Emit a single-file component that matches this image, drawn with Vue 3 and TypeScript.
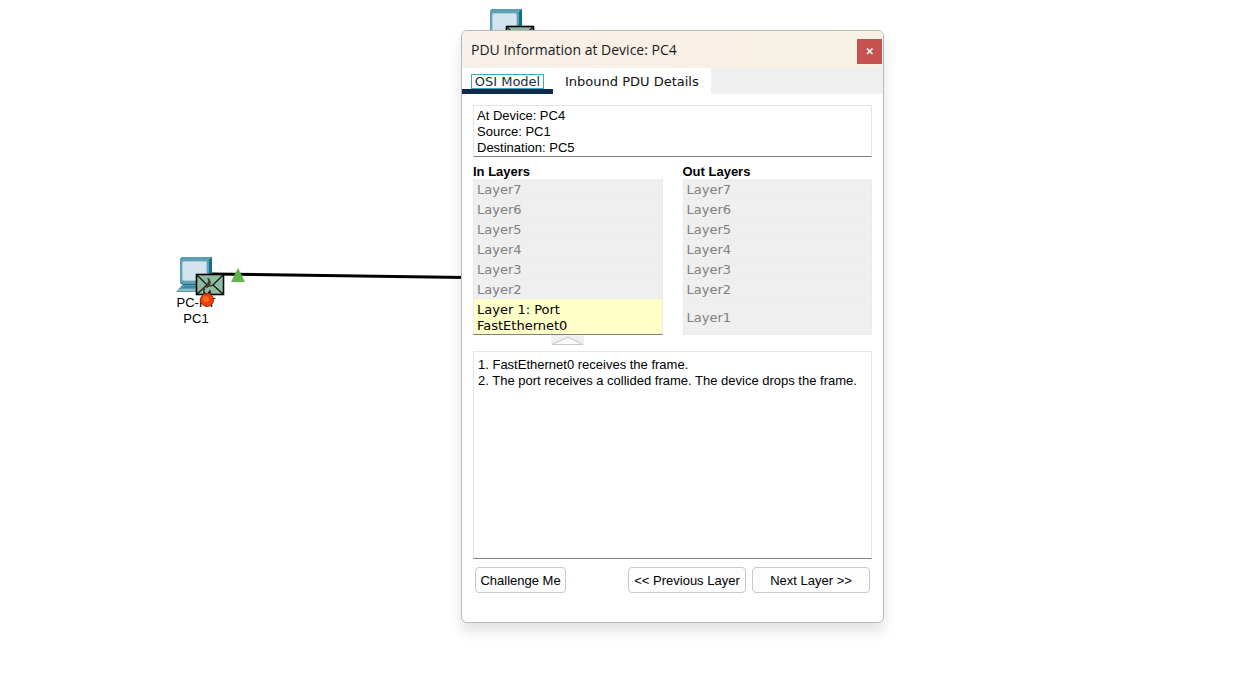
<script setup lang="ts">
import { ref } from 'vue'

interface Device { id: string; captions: string[]; x: number; y: number }

const devices: Device[] = [
  { id: 'pc4', captions: [], x: 486, y: 5 },
  { id: 'pc1', captions: ['PC-PT', 'PC1'], x: 176, y: 253 },
]
const tabs = ['OSI Model', 'Inbound PDU Details']
const activeTab = ref(0)
const upperLayers = [7, 6, 5, 4, 3, 2]
const summary = ['At Device: PC4', 'Source: PC1', 'Destination: PC5']
const steps = [
  'FastEthernet0 receives the frame.',
  'The port receives a collided frame. The device drops the frame.',
]
</script>

<template>
  <main class="workspace">
    <svg class="topology" role="img" aria-label="Network topology">
      <line x1="212" y1="274" x2="500" y2="278" stroke="#000" stroke-width="3" />
      <path d="M238 268l7 14h-14z" fill="#5cb947" />
      <g v-for="d in devices" :key="d.id" :transform="`translate(${d.x} ${d.y})`">
        <path d="M4 6L6 4H36V29L33 32H7L4 30z" fill="#0f7289" />
        <path d="M4 7L7 4H36L33 7z" fill="#5a9fb2" />
        <path d="M4 6H33V31H7L4 29z" fill="#62a1b5" />
        <rect x="6" y="8" width="25" height="20" rx="2" fill="#a9cbd8" />
        <rect x="7" y="9" width="23" height="18" rx="1" fill="#d2e4ed" />
        <path d="M6 32H34L32 39H0z" fill="#5d9db2" />
        <path d="M8 33H30L27 35H6z" fill="#3f879d" />
        <path d="M4 36H28L27 38H1z" fill="#8ebccb" />
        <text v-for="(caption, i) in d.captions" :key="caption" x="20" :y="54 + i * 16" class="device-text">{{ caption }}</text>
        <rect x="20.5" y="21.5" width="27" height="20" fill="#8dbca3" stroke="#000" stroke-width="1.6" />
        <path d="M21 22L31 32Q34 34 37 32L47 22M21 41L31 32M47 41L37 32" fill="none" stroke="#111" stroke-width="1.2" />
        <path d="M32 25q4 4 1 8l-2 2q-1-3 1-5q1-2 0-5zM29 33q-4 3-1 5q1-2 1-5z" fill="#453b2c" stroke="#453b2c" stroke-width="1" />
        <path d="M28 44V39L31 42L34 38L35 44" fill="none" stroke="#2b1a12" stroke-width="1.4" />
        <circle cx="31" cy="47" r="6.5" fill="#f33d08" stroke="#9a3010" stroke-width="1" />
        <circle cx="30" cy="46" r="3" fill="#ff6a1c" />
      </g>
    </svg>

    <section class="dialog" role="dialog" aria-labelledby="dialog-title">
      <header class="titlebar">
        <h1 id="dialog-title">PDU Information at Device: PC4</h1>
        <button class="close" type="button" aria-label="Close">
          <svg width="8" height="8" viewBox="0 0 8 8"><path d="M1 1.5l5.500 5.500M6.500 1.500L1 7" stroke="#fff" stroke-width="1.600" /></svg>
        </button>
      </header>

      <nav class="tabs" role="tablist">
        <button
          v-for="(tab, i) in tabs"
          :key="tab"
          type="button"
          role="tab"
          class="tab"
          :class="{ active: i === activeTab }"
          :aria-selected="i === activeTab"
          @click="activeTab = i"
        ><span>{{ tab }}</span></button>
      </nav>

      <div class="body">
        <div class="panel summary">
          <p v-for="line in summary" :key="line">{{ line }}</p>
        </div>

        <div class="stacks">
          <div class="stack">
            <h2>In Layers</h2>
            <ul>
              <li v-for="n in upperLayers" :key="n">Layer{{ n }}</li>
              <li class="bottom current">Layer 1: Port<br>FastEthernet0</li>
            </ul>
            <svg class="pointer" width="33" height="10" viewBox="0 0 33 10">
              <rect width="33" height="10" fill="#f0f0f0" />
              <path d="M1 9.5L17 2L32 9.5z" fill="#fafafa" stroke="#c4c4c4" />
            </svg>
          </div>
          <div class="stack">
            <h2>Out Layers</h2>
            <ul>
              <li v-for="n in upperLayers" :key="n">Layer{{ n }}</li>
              <li class="bottom">Layer1</li>
            </ul>
          </div>
        </div>

        <div class="panel details">
          <p v-for="(step, i) in steps" :key="step">{{ i + 1 }}. {{ step }}</p>
        </div>

        <footer class="actions">
          <button type="button" class="challenge">Challenge Me</button>
          <button type="button" class="step">&lt;&lt; Previous Layer</button>
          <button type="button" class="step">Next Layer &gt;&gt;</button>
        </footer>
      </div>
    </section>
  </main>
</template>

<style>
body { background: #fff; }
</style>

<style scoped>
.workspace {
  position: relative;
  min-height: 100vh;
  overflow: hidden;
  font: 13px/16px "Liberation Sans", Arial, sans-serif;
  color: #000;
}
.topology { position: absolute; inset: 0; width: 100%; height: 100%; }
.device-text { font-size: 13px; text-anchor: middle; }
.dialog {
  position: absolute;
  left: 461px;
  top: 30px;
  width: 423px;
  box-sizing: border-box;
  border: 1px solid #b9b9b9;
  border-radius: 6px;
  background: #fff;
  overflow: hidden;
  box-shadow: 0 8px 14px rgba(0, 0, 0, 0.12);
}
.titlebar {
  display: flex;
  align-items: center;
  justify-content: space-between;
  height: 37px;
  padding: 0 1px 0 9px;
  background: linear-gradient(90deg, #f8efe9, #f8f1e4);
}
h1, h2, p, ul { margin: 0; padding: 0; }
h1 { font: 400 14px/20px "Open Sans", "Noto Sans", sans-serif; color: #1a1a1a; }
.close {
  display: grid;
  place-items: center;
  width: 25px;
  height: 25px;
  margin-top: 3px;
  padding: 0;
  border: 0;
  background: #c75050;
}
.tabs { display: flex; height: 26px; background: #efefef; }
.tab {
  padding: 2px 12px 0;
  border: 0;
  background: #fff;
  color: #111;
  font: 13px/16px "DejaVu Sans", Verdana, sans-serif;
}
.tab:last-child { min-width: 157px; }
.tab.active { min-width: 91px; padding: 0 10px; box-shadow: inset 0 -5px #10294c; color: #1b2c4a; }
.tab.active span { display: block; padding: 1px 1px 0; line-height: 12px; outline: 1px solid #3aa9c4; }
.body { padding: 11px; }
.panel {
  box-sizing: border-box;
  border: 1px solid #e5e5e5;
  border-bottom-color: #808080;
}
.summary { height: 52px; padding: 2px 3px 0; }
.stacks { display: grid; grid-template-columns: 1fr 1fr; gap: 20px; margin-top: 7px; }
.stack { display: flex; flex-direction: column; }
h2 { font-size: 13px; line-height: 15px; font-weight: 700; }
ul { list-style: none; }
li {
  display: flex;
  align-items: center;
  box-sizing: border-box;
  height: 20px;
  padding: 2px 3px 0;
  border: 1px solid #ebebeb;
  border-top-width: 0;
  background: #efefef;
  color: #808080;
  font: 13px/16px "DejaVu Sans", Verdana, sans-serif;
}
.bottom { height: 36px; }
.current { background: #ffffc8; color: #000; border-bottom-color: #808080; }
.pointer { align-self: center; }
.details { height: 208px; margin-top: 6px; padding: 5px 4px; }
.actions { display: flex; gap: 6px; padding: 8px 2px 18px; }
.actions button {
  height: 26px;
  padding: 2px 0 0;
  border: 1px solid #c8c8c8;
  border-radius: 4px;
  background: #fdfdfd;
  color: #000;
  font: inherit;
}
.actions .challenge { width: 91px; margin-right: auto; }
.actions .step { width: 118px; }
</style>
